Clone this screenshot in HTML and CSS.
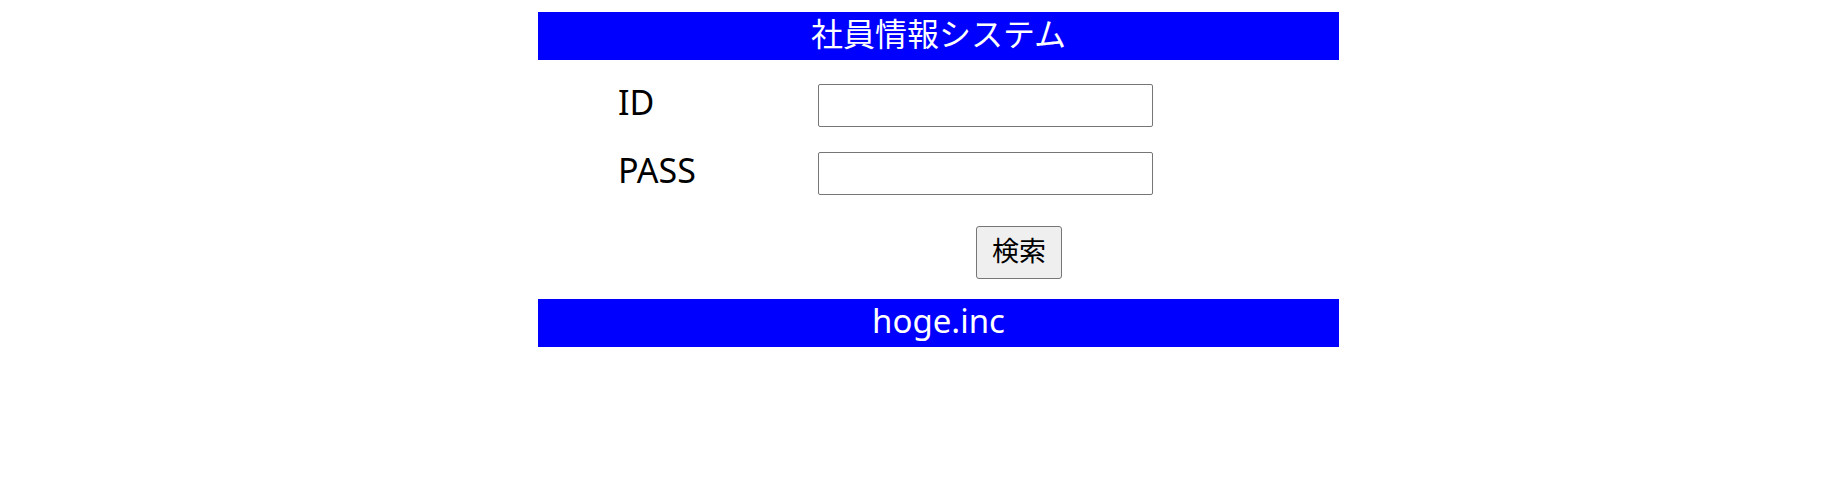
FILE: index.html
```html
<!DOCTYPE html>
<html lang="ja">
<head>
<meta charset="utf-8">
<meta name="viewport" content="width=device-width, initial-scale=1">
<title>社員情報システム</title>
<link rel="stylesheet" href="styles.css">
</head>
<body>
<div class="page">
  <header class="bar bar-title">社員情報システム</header>
  <form class="login">
    <div class="field">
      <label class="label" for="id">ID</label>
      <input class="input" id="id" name="id" type="text">
    </div>
    <div class="field">
      <label class="label" for="pass">PASS</label>
      <input class="input" id="pass" name="pass" type="password">
    </div>
    <div class="actions">
      <button class="button" type="submit">検索</button>
    </div>
  </form>
  <footer class="bar">hoge.inc</footer>
</div>
</body>
</html>
```

FILE: styles.css
```css
* {
  box-sizing: border-box;
}

body {
  margin: 0;
  padding: 12px 0 12px 33px;
  background: #fff;
  color: #000;
  font-family: "Noto Sans", "Noto Sans CJK JP", sans-serif;
  font-size: 33px;
  line-height: 36px;
}

.page {
  max-width: 801px;
  margin: 0 auto;
}

.bar {
  padding: 4px 0 8px;
  background: #00f;
  color: #fff;
  text-align: center;
}

.bar-title {
  font-size: 32px;
}

.login {
  display: flex;
  flex-direction: column;
  gap: 25px;
  padding: 24px 80px 20px;
}

.field {
  display: flex;
}

.label {
  flex: 0 0 200px;
  font-size: 34px;
}

.input {
  flex: 0 1 335px;
  min-width: 0;
  height: 43px;
  padding: 2px 4px;
  border: 1px solid #767676;
  border-radius: 2px;
  background: #fff;
  font: inherit;
}

.actions {
  display: flex;
  padding: 6px 0 0 358px;
}

.button {
  padding: 6px 15px 9px;
  border: 1px solid #767676;
  border-radius: 3px;
  background: #efefef;
  color: #000;
  font-family: inherit;
  font-size: 27px;
  line-height: 36px;
}
```
